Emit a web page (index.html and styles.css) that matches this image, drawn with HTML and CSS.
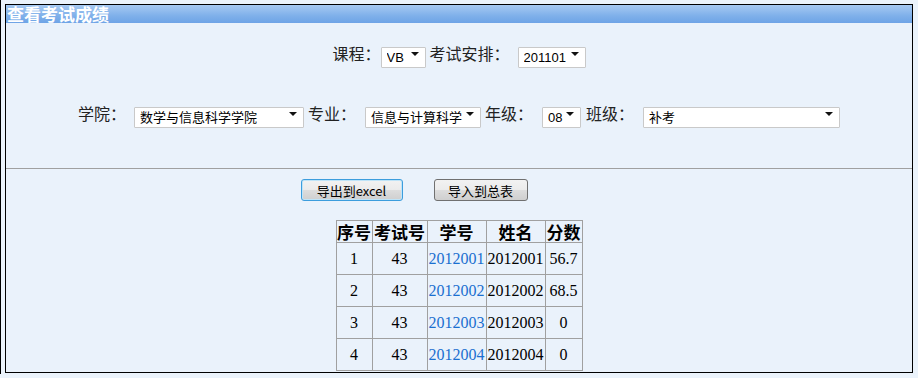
FILE: index.html
```html
<!DOCTYPE html>
<html lang="zh-CN">
<head>
  <meta charset="UTF-8" />
  <title>查看考试成绩</title>
  <link rel="stylesheet" href="styles.css">
</head>
<body>
  <div class="frame">
    <div class="title">查看考试成绩</div>

    <div class="filters">
      <div class="row">
        <label>课程：</label>
        <span class="sel w-course"><select><option>VB</option></select></span>
        <label class="ml4">考试安排：</label>
        <span class="sel w-plan ml8"><select><option>201101</option></select></span>
      </div>
      <div class="row">
        <label>学院：</label>
        <span class="sel w-college ml8"><select><option>数学与信息科学学院</option></select></span>
        <label class="ml4">专业：</label>
        <span class="sel w-major ml9"><select><option>信息与计算科学</option></select></span>
        <label class="ml4">年级：</label>
        <span class="sel w-grade ml9"><select><option>08</option></select></span>
        <label class="ml5">班级：</label>
        <span class="sel w-class ml9"><select><option>补考</option></select></span>
      </div>
    </div>

    <div class="actions">
      <button class="btn focused">导出到excel</button>
      <button class="btn">导入到总表</button>
    </div>

    <table class="scores">
      <colgroup>
        <col class="c-no"><col class="c-exam"><col class="c-id"><col class="c-name"><col class="c-score">
      </colgroup>
      <thead>
        <tr><th>序号</th><th>考试号</th><th>学号</th><th>姓名</th><th>分数</th></tr>
      </thead>
      <tbody>
        <tr><td>1</td><td>43</td><td><a href="#">2012001</a></td><td>2012001</td><td>56.7</td></tr>
        <tr><td>2</td><td>43</td><td><a href="#">2012002</a></td><td>2012002</td><td>68.5</td></tr>
        <tr><td>3</td><td>43</td><td><a href="#">2012003</a></td><td>2012003</td><td>0</td></tr>
        <tr><td>4</td><td>43</td><td><a href="#">2012004</a></td><td>2012004</td><td>0</td></tr>
      </tbody>
    </table>
  </div>
</body>
</html>
```

FILE: styles.css
```css
* {
  box-sizing: border-box;
}

body {
  margin: 0;
  padding: 4px 5px 0 4px;
  background: #ebf3fb;
  border-left: 1px solid #000;
  font-family: "Noto Sans CJK SC", "Liberation Sans", sans-serif;
  color: #1a1a1a;
  height: 374px;
}

.frame {
  width: 908px;
  height: 369px;
  border: 1px solid #000;
  background: #eaf2fb;
}

.title {
  height: 18px;
  padding-left: 1px;
  font-size: 17px;
  line-height: 18px;
  font-weight: 700;
  color: #fff;
  background: linear-gradient(#a6c9f2, #7fb0ea 60%, #6ea4e6);
}

.filters {
  padding: 19px 0 44px;
  border-bottom: 1px solid #a0a0a0;
}

.row {
  display: flex;
  justify-content: center;
  align-items: center;
  height: 22px;
}

.row + .row {
  margin-top: 38px;
}

label {
  font-size: 16px;
  line-height: 22px;
  color: #222;
  white-space: nowrap;
}

.ml4 { margin-left: 4px; }
.ml5 { margin-left: 5px; }
.ml8 { margin-left: 8px; }
.ml9 { margin-left: 9px; }

.sel {
  position: relative;
  display: inline-block;
  height: 21px;
}

.sel select {
  appearance: none;
  -webkit-appearance: none;
  width: 100%;
  height: 21px;
  margin: 0;
  padding: 0 0 0 5px;
  border: 1px solid #c9c9c9;
  border-radius: 1px;
  background: #fff;
  font-family: "Liberation Sans", "Noto Sans CJK SC", sans-serif;
  font-size: 13px;
  color: #000;
}

.sel::after {
  content: "";
  position: absolute;
  right: 7px;
  top: 9px;
  border-left: 4px solid transparent;
  border-right: 4px solid transparent;
  border-top: 4px solid #111;
  pointer-events: none;
}

.w-course { width: 45px; }
.w-plan { width: 68px; }
.w-college { width: 170px; }
.w-major { width: 116px; }
.w-grade { width: 39px; }
.w-class { width: 197px; }

.actions {
  display: flex;
  justify-content: center;
  gap: 31px;
  padding-right: 90px;
  margin-top: 10px;
}

.btn {
  height: 22px;
  padding: 0;
  border: 1px solid #707070;
  border-radius: 3px;
  background: linear-gradient(#f2f2f2 0%, #ebebeb 50%, #dddddd 51%, #cfcfcf 100%);
  font-family: "Noto Sans CJK SC", "Liberation Sans", sans-serif;
  font-size: 13px;
  color: #000;
  width: 94px;
}

.btn.focused {
  width: 102px;
  border-color: #3c9ddd;
  box-shadow: inset 0 0 0 1px #bfe4f8;
}

.scores {
  margin: 19px auto 0;
  border-collapse: collapse;
  table-layout: fixed;
  width: 246px;
  font-family: "Liberation Serif", "Noto Sans CJK SC", serif;
  font-size: 16px;
  color: #000;
}

.c-no { width: 36px; }
.c-exam { width: 55px; }
.c-id { width: 59px; }
.c-name { width: 59px; }
.c-score { width: 37px; }

.scores th,
.scores td {
  border: 1px solid #a0a0a0;
  padding: 0;
  text-align: center;
  white-space: nowrap;
}

.scores th {
  height: 22px;
  font-family: "Noto Sans CJK SC", sans-serif;
  font-size: 17px;
  font-weight: 700;
  line-height: 20px;
}

.scores td {
  height: 32px;
}

.scores a {
  color: #1a6fd0;
  text-decoration: none;
}
```
